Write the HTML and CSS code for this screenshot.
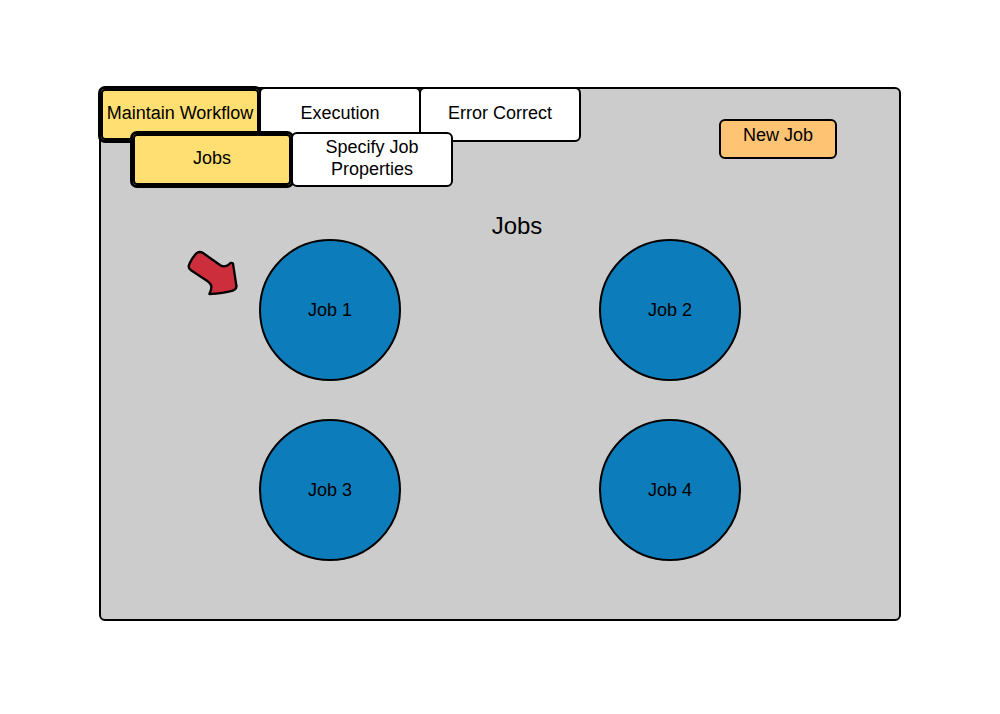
FILE: index.html
```html
<!DOCTYPE html>
<html lang="en">
<head>
<meta charset="utf-8">
<title>Jobs</title>
<link rel="stylesheet" href="styles.css">
</head>
<body>
<main class="panel">
  <header class="top">
    <nav class="tabs">
      <div class="tab-row">
        <button class="tab active" type="button">Maintain Workflow</button>
        <button class="tab" type="button">Execution</button>
        <button class="tab" type="button">Error Correct</button>
      </div>
      <div class="tab-row sub">
        <button class="tab active" type="button">Jobs</button>
        <button class="tab" type="button">Specify Job Properties</button>
      </div>
    </nav>
    <button class="new-job" type="button">New Job</button>
  </header>
  <h1 class="title">Jobs</h1>
  <section class="jobs">
    <div class="job-item">
      <button class="job" type="button">Job 1</button>
      <svg class="pointer" width="70" height="65" viewBox="0 0 210 195" aria-hidden="true">
        <path d="M48 41 Q58 32 69 39 L120 75 Q134 84 146 74 Q153 65 159 71 L169 136 Q171 147 158 152 Q130 161 88 162 Q95 148 94 139 Q94 132 83 124 L33 91 Q22 84 29 70 Q36 54 48 41 Z"/>
      </svg>
    </div>
    <div class="job-item"><button class="job" type="button">Job 2</button></div>
    <div class="job-item"><button class="job" type="button">Job 3</button></div>
    <div class="job-item"><button class="job" type="button">Job 4</button></div>
  </section>
</main>
</body>
</html>
```

FILE: styles.css
```css
* {
  box-sizing: border-box;
}

body {
  margin: 0;
  padding: 87px 99px;
  background: #fff;
  color: #000;
  font-family: "Liberation Sans", Arial, sans-serif;
  font-size: 18px;
  line-height: 22px;
}

button {
  border: 2px solid #000;
  color: inherit;
  font: inherit;
  cursor: pointer;
}

.panel {
  padding-bottom: 58px;
  border: 2px solid #000;
  border-radius: 6px;
  background: #ccc;
}

.top {
  display: flex;
  justify-content: space-between;
  align-items: flex-start;
}

.tabs {
  margin: -2px 0 0 -2px;
}

.tab-row {
  display: flex;
}

.tab-row.sub {
  margin: -10px 0 0 32px;
}

.tab {
  width: 162px;
  min-height: 55px;
  padding: 0 4px 3px;
  border-radius: 6px;
  background: #fff;
}

.tab + .tab {
  margin-left: -2px;
}

.tab.active {
  background: #ffdf71;
  box-shadow: 0 0 0 1px #000, inset 0 0 0 2px #000;
}

.sub .tab {
  padding: 0 24px 4px;
}

.new-job {
  margin: 30px 62px 0 0;
  padding: 3px 22px 11px;
  border-radius: 6px;
  background: #ffc374;
}

.title {
  margin: 26px 0 0;
  padding-left: 34px;
  font-size: 24px;
  font-weight: 400;
  line-height: 26px;
  text-align: center;
}

.jobs {
  display: grid;
  grid-template-columns: repeat(2, 142px);
  justify-content: center;
  gap: 38px 198px;
}

.job-item {
  position: relative;
}

.job {
  display: block;
  width: 142px;
  height: 142px;
  padding: 0;
  border-radius: 50%;
  background: #0c7cba;
}

.pointer {
  position: absolute;
  top: 1px;
  left: -79px;
  fill: #cc2f3b;
  stroke: #000;
  stroke-width: 7;
  stroke-linejoin: round;
}
```
